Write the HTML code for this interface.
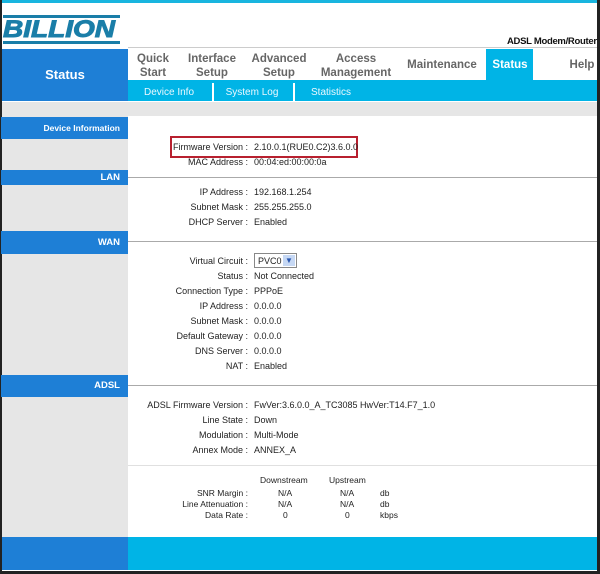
<!DOCTYPE html><html><head><style>
*{margin:0;padding:0;box-sizing:border-box}
body{width:600px;height:574px;position:relative;background:#fff;font-family:"Liberation Sans",Arial,sans-serif;overflow:hidden}
.a{position:absolute}
.nav{position:absolute;top:52px;font-size:11.5px;font-weight:bold;color:#666;text-align:center;line-height:14px;transform:translateX(-50%);white-space:nowrap}
.sub{position:absolute;top:87px;font-size:10px;color:#eaf8ff;transform:translateX(-50%);white-space:nowrap}
.bar{position:absolute;left:1px;width:127px;background:#1e7fd6;color:#fff;font-weight:bold;font-size:9.5px;text-align:right;padding-right:8px}
.hl{position:absolute;left:128px;width:469px;height:1px;background:#aaa}
.r{position:absolute;font-size:9px;color:#222;white-space:nowrap}
.l{position:absolute;right:352px;text-align:right}
.v{position:absolute;left:254px}
</style></head><body>
<div class="a" style="left:0;top:0;width:600px;height:3px;background:#18b5df"></div>
<div class="a" style="left:0;top:0;width:2px;height:574px;background:#222"></div>
<div class="a" style="left:0;top:571px;width:600px;height:3px;background:#222"></div>
<div class="a" style="left:3px;top:15px;width:117px;height:3px;background:#1a7ea8"></div>
<div class="a" style="left:3px;top:15px;font:italic 900 25px/30px 'Liberation Sans',sans-serif;color:#1a7ea8;letter-spacing:0px;transform:scale(1.12,0.95);transform-origin:left top;-webkit-text-stroke:1px #1a7ea8">BILLION</div>
<div class="a" style="left:3px;top:41px;width:117px;height:3px;background:#1a7ea8"></div>
<div class="a" style="left:507px;top:36px;font-size:9.5px;letter-spacing:-0.3px;font-weight:bold;color:#111;white-space:nowrap">ADSL Modem/Router</div>
<div class="a" style="left:597px;top:0;width:3px;height:574px;background:#222"></div>
<div class="a" style="left:128px;top:47px;width:469px;height:1px;background:#ccc"></div>
<div class="a" style="left:2px;top:49px;width:126px;height:52px;background:#1e7fd6;color:#fff;font-weight:bold;font-size:13px;text-align:center;line-height:52px">Status</div>
<div class="nav" style="left:153px">Quick<br>Start</div>
<div class="nav" style="left:212px">Interface<br>Setup</div>
<div class="nav" style="left:279px">Advanced<br>Setup</div>
<div class="nav" style="left:356px">Access<br>Management</div>
<div class="nav" style="left:442px;top:58px">Maintenance</div>
<div class="a" style="left:486px;top:49px;width:47px;height:32px;background:#00b4e6"></div>
<div class="nav" style="left:510px;top:58px;color:#fff">Status</div>
<div class="nav" style="left:582px;top:58px">Help</div>
<div class="a" style="left:128px;top:80px;width:469px;height:21px;background:#00b4e6"></div>
<div class="a" style="left:212px;top:83px;width:2px;height:18px;background:#fff"></div>
<div class="a" style="left:293px;top:83px;width:2px;height:18px;background:#fff"></div>
<div class="sub" style="left:169px">Device Info</div>
<div class="sub" style="left:252px">System Log</div>
<div class="sub" style="left:331px">Statistics</div>
<div class="a" style="left:2px;top:102px;width:595px;height:14px;background:#e6e6e6"></div>
<div class="a" style="left:2px;top:116px;width:126px;height:421px;background:#e6e6e6"></div>
<div class="bar" style="top:117px;height:22px;line-height:22px;font-size:8.5px">Device Information</div>
<div class="a" style="left:170px;top:136px;width:188px;height:22px;border:2px solid #b8202f"></div>
<div class="bar" style="top:170px;height:15px;line-height:15px">LAN</div><div class="hl" style="top:177px"></div>
<div class="bar" style="top:231px;height:23px;line-height:23px">WAN</div><div class="hl" style="top:241px"></div>
<div class="bar" style="top:375px;height:22px;line-height:22px">ADSL</div><div class="hl" style="top:385px"></div>
<div class="a" style="left:128px;top:465px;width:469px;height:1px;background:#e0e0e0"></div>

<div class="r" style="top:142px;left:0;width:600px"><span class="l">Firmware Version :</span><span class="v">2.10.0.1(RUE0.C2)3.6.0.0</span></div>
<div class="r" style="top:157px;left:0;width:600px"><span class="l">MAC Address :</span><span class="v">00:04:ed:00:00:0a</span></div>
<div class="r" style="top:187px;left:0;width:600px"><span class="l">IP Address :</span><span class="v">192.168.1.254</span></div>
<div class="r" style="top:202px;left:0;width:600px"><span class="l">Subnet Mask :</span><span class="v">255.255.255.0</span></div>
<div class="r" style="top:217px;left:0;width:600px"><span class="l">DHCP Server :</span><span class="v">Enabled</span></div>
<div class="r" style="top:256px;left:0;width:600px"><span class="l">Virtual Circuit :</span><span class="v" style="top:-3px;border:1px solid #888;width:43px;height:15px;padding:2px 0 0 3px;background:#fff">PVC0<span style="position:absolute;right:1px;top:1px;width:12px;height:11px;background:#c6d8f4;color:#2a58b0;font-size:8px;text-align:center;line-height:11px">&#9660;</span></span></div>
<div class="r" style="top:271px;left:0;width:600px"><span class="l">Status :</span><span class="v">Not Connected</span></div>
<div class="r" style="top:286px;left:0;width:600px"><span class="l">Connection Type :</span><span class="v">PPPoE</span></div>
<div class="r" style="top:301px;left:0;width:600px"><span class="l">IP Address :</span><span class="v">0.0.0.0</span></div>
<div class="r" style="top:316px;left:0;width:600px"><span class="l">Subnet Mask :</span><span class="v">0.0.0.0</span></div>
<div class="r" style="top:331px;left:0;width:600px"><span class="l">Default Gateway :</span><span class="v">0.0.0.0</span></div>
<div class="r" style="top:346px;left:0;width:600px"><span class="l">DNS Server :</span><span class="v">0.0.0.0</span></div>
<div class="r" style="top:361px;left:0;width:600px"><span class="l">NAT :</span><span class="v">Enabled</span></div>
<div class="r" style="top:400px;left:0;width:600px"><span class="l">ADSL Firmware Version :</span><span class="v">FwVer:3.6.0.0_A_TC3085 HwVer:T14.F7_1.0</span></div>
<div class="r" style="top:415px;left:0;width:600px"><span class="l">Line State :</span><span class="v">Down</span></div>
<div class="r" style="top:430px;left:0;width:600px"><span class="l">Modulation :</span><span class="v">Multi-Mode</span></div>
<div class="r" style="top:445px;left:0;width:600px"><span class="l">Annex Mode :</span><span class="v">ANNEX_A</span></div>

<div class="r" style="top:475px;left:260px;font-size:8.5px">Downstream</div>
<div class="r" style="top:475px;left:329px;font-size:8.5px">Upstream</div>
<div class="r" style="top:488px;right:352px;font-size:8.5px">SNR Margin :</div>
<div class="r" style="top:499px;right:352px;font-size:8.5px">Line Attenuation :</div>
<div class="r" style="top:510px;right:352px;font-size:8.5px">Data Rate :</div>
<div class="r" style="top:488px;left:278px;font-size:8.5px">N/A</div>
<div class="r" style="top:499px;left:278px;font-size:8.5px">N/A</div>
<div class="r" style="top:510px;left:283px;font-size:8.5px">0</div>
<div class="r" style="top:488px;left:340px;font-size:8.5px">N/A</div>
<div class="r" style="top:499px;left:340px;font-size:8.5px">N/A</div>
<div class="r" style="top:510px;left:345px;font-size:8.5px">0</div>
<div class="r" style="top:488px;left:380px;font-size:8.5px">db</div>
<div class="r" style="top:499px;left:380px;font-size:8.5px">db</div>
<div class="r" style="top:510px;left:380px;font-size:8.5px">kbps</div>

<div class="a" style="left:2px;top:537px;width:126px;height:33px;background:#1e7fd6"></div>
<div class="a" style="left:128px;top:537px;width:469px;height:33px;background:#00b4e6"></div>
</body></html>
